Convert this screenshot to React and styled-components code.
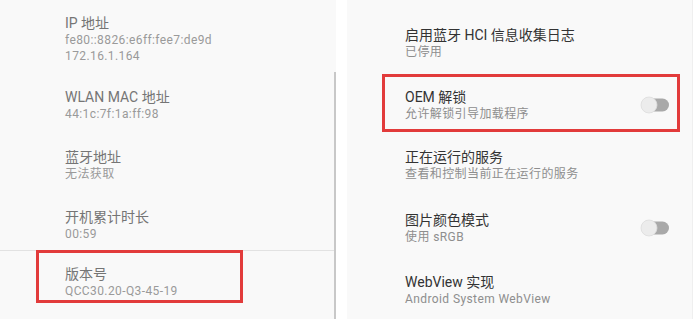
import React from "react";
import styled, { createGlobalStyle } from "styled-components";

const GlobalStyle = createGlobalStyle`
	html, body {
		margin: 0;
		padding: 0;
		background: #ffffff;
	}
	body {
		font-family: Roboto, "Noto Sans CJK SC", "Noto Sans", sans-serif;
	}
`;

const Page = styled.div`
	display: flex;
	width: 700px;
	height: 319px;
	overflow: hidden;
	background: #ffffff;
`;

const LeftPanel = styled.div`
	position: relative;
	width: 336px;
	height: 319px;
	background: #f9f9f9;
	box-sizing: border-box;
`;

const RightPanel = styled.div`
	display: flex;
	flex-direction: column;
	width: 346px;
	height: 319px;
	margin-left: 11px;
	background: #f9f9f9;
	border-right: 1px solid #efefef;
	box-sizing: border-box;
`;

const ScrollBar = styled.div`
	position: absolute;
	right: 0;
	top: 72px;
	bottom: 0;
	width: 2px;
	background: #c8c8c8;
`;

const InfoItem = styled.div`
	display: flex;
	flex-direction: column;
	height: ${(p) => p.$h}px;
	padding: ${(p) => p.$top}px 0 0 65px;
	box-sizing: border-box;
`;

const Divider = styled.div`
	height: 1px;
	width: 334px;
	background: #e2e2e2;
`;

const MarkedInfo = styled.div`
	display: flex;
	flex-direction: column;
	width: 207px;
	height: 53px;
	margin: -1px 0 0 36px;
	padding: 12.5px 0 0 26px;
	border: 3px solid #e23b3b;
	box-sizing: border-box;
`;

const InfoTitle = styled.div`
	font-size: 14px;
	line-height: 17px;
	color: #757575;
`;

const InfoValue = styled.div`
	font-size: 12px;
	line-height: 16px;
	color: #9a9a9a;
	letter-spacing: 0.4px;
`;

const OptionRow = styled.div`
	display: flex;
	align-items: flex-start;
	justify-content: space-between;
	height: ${(p) => p.$h}px;
	padding: ${(p) => p.$top}px 22px 0 58px;
	box-sizing: border-box;
	${(p) =>
		p.$marked &&
		`
		margin: 0 12px 0 35px;
		padding: ${p.$top}px 7px 0 20px;
		border: 3px solid #e23b3b;
	`}
`;

const OptionText = styled.div`
	display: flex;
	flex-direction: column;
`;

const OptionTitle = styled.div`
	font-size: 14px;
	line-height: 17px;
	color: #333333;
`;

const OptionSub = styled.div`
	font-size: 12px;
	line-height: 17px;
	color: #8e8e8e;
	letter-spacing: 0.4px;
`;

const SwitchWrap = styled.div`
	width: 30px;
	height: 18px;
	margin-top: ${(p) => p.$offset}px;
`;

const Switch = ({ offset }) => (
	<SwitchWrap $offset={offset}>
		<svg width="30" height="18" viewBox="0 0 30 18">
			<rect x="7" y="2.5" width="22" height="13" rx="6.5" fill="#a9a9a9" />
			<circle cx="9" cy="9" r="8" fill="#ececec" stroke="#dcdcdc" strokeWidth="0.8" />
		</svg>
	</SwitchWrap>
);

const info = [
	{ title: "IP 地址", values: ["fe80::8826:e6ff:fee7:de9d", "172.16.1.164"], h: 76, top: 14.5 },
	{ title: "WLAN MAC 地址", values: ["44:1c:7f:1a:ff:98"], h: 59, top: 12.5 },
	{ title: "蓝牙地址", values: ["无法获取"], h: 59, top: 13.5 },
	{ title: "开机累计时长", values: ["00:59"], h: 56, top: 14.5 },
];

const App = () => {
	return (
		<>
			<GlobalStyle />
			<Page>
				<LeftPanel>
					{info.map((item) => (
						<InfoItem key={item.title} $h={item.h} $top={item.top}>
							<InfoTitle>{item.title}</InfoTitle>
							{item.values.map((v) => (
								<InfoValue key={v}>{v}</InfoValue>
							))}
						</InfoItem>
					))}
					<Divider />
					<MarkedInfo>
						<InfoTitle>版本号</InfoTitle>
						<InfoValue>QCC30.20-Q3-45-19</InfoValue>
					</MarkedInfo>
					<ScrollBar />
				</LeftPanel>
				<RightPanel>
					<OptionRow $h={74} $top={26.5}>
						<OptionText>
							<OptionTitle>启用蓝牙 HCI 信息收集日志</OptionTitle>
							<OptionSub>已停用</OptionSub>
						</OptionText>
					</OptionRow>
					<OptionRow $marked $h={58} $top={11.5}>
						<OptionText>
							<OptionTitle>OEM 解锁</OptionTitle>
							<OptionSub>允许解锁引导加载程序</OptionSub>
						</OptionText>
						<Switch offset={7} />
					</OptionRow>
					<OptionRow $h={62} $top={16.5}>
						<OptionText>
							<OptionTitle>正在运行的服务</OptionTitle>
							<OptionSub>查看和控制当前正在运行的服务</OptionSub>
						</OptionText>
					</OptionRow>
					<OptionRow $h={62} $top={17.5}>
						<OptionText>
							<OptionTitle>图片颜色模式</OptionTitle>
							<OptionSub>使用 sRGB</OptionSub>
						</OptionText>
						<Switch offset={7.5} />
					</OptionRow>
					<OptionRow $h={63} $top={17.5}>
						<OptionText>
							<OptionTitle>WebView 实现</OptionTitle>
							<OptionSub>Android System WebView</OptionSub>
						</OptionText>
					</OptionRow>
				</RightPanel>
			</Page>
		</>
	);
};

export default App;
